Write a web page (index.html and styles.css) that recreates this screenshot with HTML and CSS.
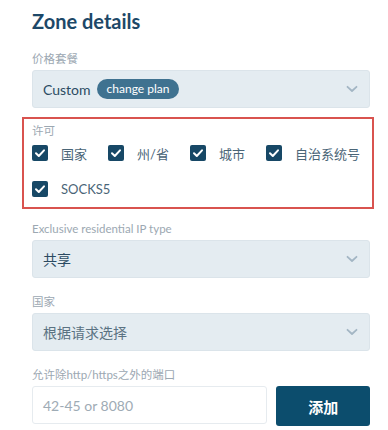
FILE: index.html
```html
<!DOCTYPE html>
<html>
<head>
<meta charset="utf-8">
<link rel="stylesheet" href="styles.css">
</head>
<body>
<div class="page">
  <h1 class="title">Zone details</h1>

  <div class="field f-plan">
    <div class="label">价格套餐</div>
    <div class="select">
      <span class="value">Custom</span>
      <span class="badge">change plan</span>
      <svg class="chev" width="12" height="8" viewBox="0 0 12 8"><path d="M1.5 1.8 L6 6 L10.5 1.8" fill="none" stroke="#a3b6c4" stroke-width="1.8" stroke-linecap="round" stroke-linejoin="round"/></svg>
    </div>
  </div>

  <div class="perm">
    <div class="label">许可</div>
    <div class="checks">
      <label class="check"><span class="box"><svg width="16" height="16" viewBox="0 0 16 16"><path d="M4 8.3 L6.8 11 L12 5.3" fill="none" stroke="#fff" stroke-width="2" stroke-linecap="round" stroke-linejoin="round"/></svg></span><span class="ct">国家</span></label>
      <label class="check"><span class="box"><svg width="16" height="16" viewBox="0 0 16 16"><path d="M4 8.3 L6.8 11 L12 5.3" fill="none" stroke="#fff" stroke-width="2" stroke-linecap="round" stroke-linejoin="round"/></svg></span><span class="ct">州/省</span></label>
      <label class="check"><span class="box"><svg width="16" height="16" viewBox="0 0 16 16"><path d="M4 8.3 L6.8 11 L12 5.3" fill="none" stroke="#fff" stroke-width="2" stroke-linecap="round" stroke-linejoin="round"/></svg></span><span class="ct">城市</span></label>
      <label class="check"><span class="box"><svg width="16" height="16" viewBox="0 0 16 16"><path d="M4 8.3 L6.8 11 L12 5.3" fill="none" stroke="#fff" stroke-width="2" stroke-linecap="round" stroke-linejoin="round"/></svg></span><span class="ct">自治系统号</span></label>
      <label class="check"><span class="box"><svg width="16" height="16" viewBox="0 0 16 16"><path d="M4 8.3 L6.8 11 L12 5.3" fill="none" stroke="#fff" stroke-width="2" stroke-linecap="round" stroke-linejoin="round"/></svg></span><span class="ct">SOCKS5</span></label>
    </div>
  </div>

  <div class="field f-ip">
    <div class="label">Exclusive residential IP type</div>
    <div class="select">
      <span class="value">共享</span>
      <svg class="chev" width="12" height="8" viewBox="0 0 12 8"><path d="M1.5 1.8 L6 6 L10.5 1.8" fill="none" stroke="#a3b6c4" stroke-width="1.8" stroke-linecap="round" stroke-linejoin="round"/></svg>
    </div>
  </div>

  <div class="field f-country">
    <div class="label">国家</div>
    <div class="select">
      <span class="value muted">根据请求选择</span>
      <svg class="chev" width="12" height="8" viewBox="0 0 12 8"><path d="M1.5 1.8 L6 6 L10.5 1.8" fill="none" stroke="#a3b6c4" stroke-width="1.8" stroke-linecap="round" stroke-linejoin="round"/></svg>
    </div>
  </div>

  <div class="field f-port">
    <div class="label">允许除http/https之外的端口</div>
    <div class="port-row">
      <div class="input"><span class="ph">42-45 or 8080</span></div>
      <button class="btn">添加</button>
    </div>
  </div>
</div>
</body>
</html>
```

FILE: styles.css
```css
html, body {
  margin: 0;
  padding: 0;
  background: #ffffff;
}
body {
  font-family: Lato, "Noto Sans CJK SC", sans-serif;
  color: #24475f;
}
.page {
  padding: 9px 18px 0 32px;
  width: 338px;
}
.title {
  margin: 0 0 18px 0;
  font-size: 20px;
  line-height: 24px;
  font-weight: 700;
  color: #1d4868;
}
.label {
  font-size: 11.5px;
  line-height: 16px;
  color: #9ca8b2;
  margin-bottom: 3px;
}
.select {
  height: 38px;
  box-sizing: border-box;
  background: #e4ecf1;
  border: 1px solid #dbe4ea;
  border-radius: 3px;
  display: flex;
  align-items: center;
  padding: 0 10px 0 10px;
}
.value {
  font-size: 14px;
  color: #2b4b62;
}
.value.muted {
  color: #5a7282;
}
.badge {
  margin-left: 6px;
  height: 20px;
  line-height: 19px;
  padding: 0 10px;
  border-radius: 10px;
  background: #3f7290;
  color: #ffffff;
  font-size: 12px;
}
.chev {
  margin-left: auto;
  margin-right: 1px;
}
.f-plan { margin-bottom: 9px; }
.perm {
  margin: 0 -4px 12px -10px;
  border: 2px solid #d9534f;
  padding: 4px 0 0 8px;
  height: 84px;
}
.perm .label { margin-bottom: 0; }
.checks {
  display: flex;
  flex-wrap: wrap;
  column-gap: 21px;
  row-gap: 8px;
}
.check {
  display: flex;
  align-items: center;
  height: 28px;
  gap: 13px;
}
.box {
  width: 16px;
  height: 16px;
  border-radius: 2px;
  background: #174866;
  display: flex;
}
.ct {
  font-size: 13px;
  color: #4a6577;
}
.f-ip { margin-bottom: 16px; }
.f-country { margin-bottom: 16px; }
.port-row {
  display: flex;
  gap: 9px;
  align-items: flex-start;
}
.input {
  width: 236px;
  height: 38px;
  box-sizing: border-box;
  border: 1px solid #e6ebef;
  border-radius: 3px;
  background: #fff;
  display: flex;
  align-items: center;
  padding-left: 10px;
}
.ph {
  font-size: 14px;
  color: #9eabb5;
}
.btn {
  width: 94px;
  height: 40px;
  border: none;
  border-radius: 3px;
  background: #0c4d6d;
  color: #fff;
  font-family: Lato, "Noto Sans CJK SC", sans-serif;
  font-size: 15px;
  font-weight: 700;
  padding: 0;
}
```
